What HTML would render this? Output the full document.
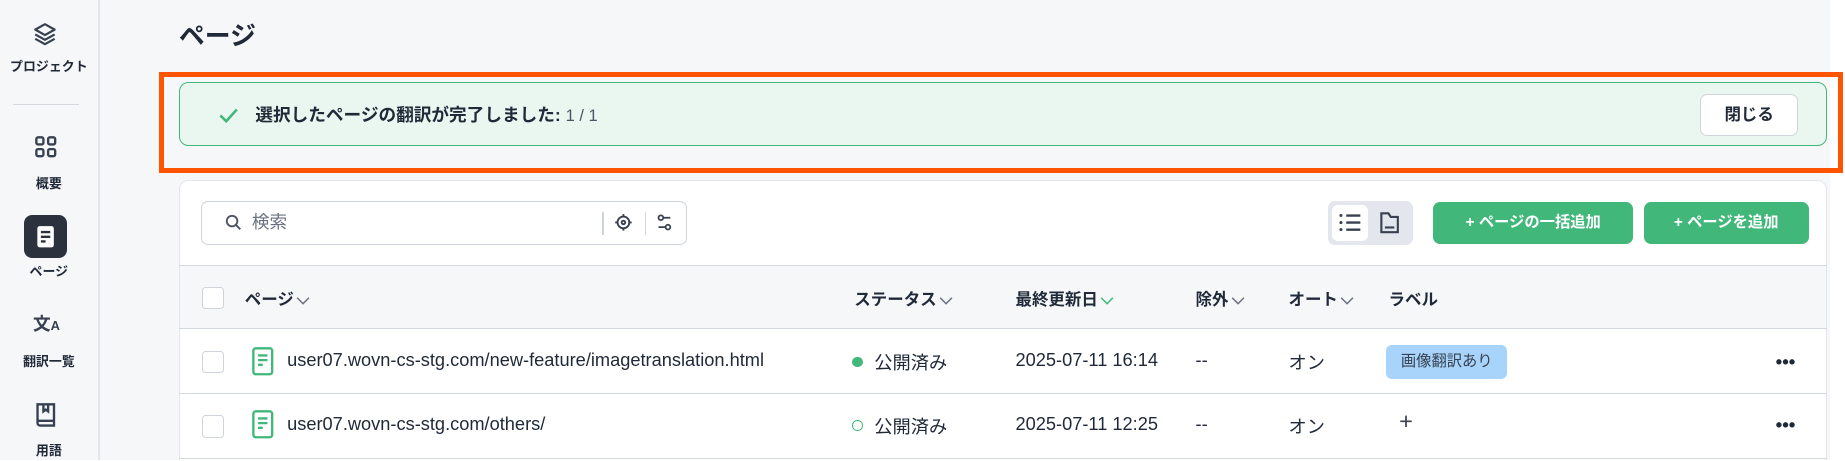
<!DOCTYPE html>
<html><head><meta charset="utf-8"><style>
*{box-sizing:border-box;margin:0;padding:0}
html,body{width:1845px;height:461px;overflow:hidden;background:#fff}
body{font-family:"Liberation Sans","Noto Sans CJK JP",sans-serif;color:#1f2937}
#w{position:relative;width:1568px;height:391px;zoom:1.1767;overflow:hidden}
.abs{position:absolute}
.side{left:0;top:0;width:85px;height:391px;background:#f6f7f9;border-right:2px solid #e3e6ea}
.main{left:85px;top:0;width:1470px;height:391px;background:#f6f7f9}
.nav{position:absolute;left:0;width:83px;text-align:center;font-size:11px;font-weight:bold;color:#1f2937}
.hc{font-size:14px;font-weight:bold;color:#1f2937;top:243px}
.cb{width:18px;height:19px;border:1px solid #cfd4db;border-radius:3px;background:#fff}
.cell{font-size:15.5px;color:#1f2937}
.line{height:1px;background:#d4d9e0;left:152px;width:1401px}
.btn{background:#41b87a;color:#fff;font-size:13px;font-weight:bold;border-radius:6px;text-align:center;line-height:35px;height:35px;top:172px}
.cv{display:inline-block;vertical-align:middle;margin-left:2px}
</style></head><body><div id="w">
<div class="abs side"></div>
<div class="abs main"></div>
<svg class="abs" style="left:27px;top:18px" width="22" height="22" viewBox="0 0 24 24" fill="none" stroke="#374151" stroke-width="2" stroke-linejoin="round"><path d="M12 3 3 8l9 5 9-5z"/><path d="M3 12.5l9 5 9-5"/><path d="M3 16.5l9 5 9-5"/></svg>
<div class="nav" style="top:48px">プロジェクト</div>
<div class="abs" style="left:11px;top:88px;width:56px;height:1px;background:#d4d9e0"></div>
<svg class="abs" style="left:29px;top:115px" width="20" height="20" viewBox="0 0 20 20" fill="none" stroke="#374151" stroke-width="2"><rect x="2" y="2" width="6" height="6" rx="1.5"/><rect x="12" y="2" width="6" height="6" rx="1.5"/><rect x="2" y="12" width="6" height="6" rx="1.5"/><rect x="12" y="12" width="6" height="6" rx="1.5"/></svg>
<div class="nav" style="top:147px">概要</div>
<div class="abs" style="left:20px;top:183px;width:37px;height:36px;background:#2b323d;border-radius:7px"></div>
<svg class="abs" style="left:30px;top:191px" width="18" height="20" viewBox="0 0 18 20"><rect x="2" y="1" width="14" height="18" rx="2" fill="#fff"/><path d="M5 6h8M5 10h8M5 14h4" stroke="#2b323d" stroke-width="2"/></svg>
<div class="nav" style="top:222px">ページ</div>
<div class="abs" style="left:28px;top:264px;font-size:15px;font-weight:bold;color:#374151">文<span style="font-size:11px">A</span></div>
<div class="nav" style="top:298px">翻訳一覧</div>
<svg class="abs" style="left:29px;top:342px" width="20" height="22" viewBox="0 0 20 22" fill="none" stroke="#374151" stroke-width="2"><path d="M3 2h14v18H5a2 2 0 0 1-2-2z"/><path d="M3 16h14M8 2v6l2-1.5 2 1.5V2"/></svg>
<div class="nav" style="top:374px">用語</div>
<div class="abs" style="left:152px;top:14px;font-size:22px;font-weight:bold">ページ</div>
<div class="abs" style="left:135px;top:61px;width:1431px;height:86px;border:5px solid #ff5500"></div>
<div class="abs" style="left:152px;top:70px;width:1401px;height:54px;background:#eaf7f0;border:1.5px solid #41b87a;border-radius:8px"></div>
<svg class="abs" style="left:185px;top:90px" width="18" height="16" viewBox="0 0 18 16" fill="none" stroke="#41b87a" stroke-width="2.2"><path d="M2 8l5 5 9-10"/></svg>
<div class="abs" style="left:217px;top:87px;font-size:15px;font-weight:bold">選択したページの翻訳が完了しました: <span style="font-weight:normal;color:#4b5563;font-size:14px">1 / 1</span></div>
<div class="abs" style="left:1445px;top:80px;width:83px;height:36px;background:#fff;border:1px solid #cfd4db;border-radius:6px;text-align:center;line-height:34px;font-size:14px;font-weight:bold">閉じる</div>
<div class="abs" style="left:152px;top:153px;width:1401px;height:238px;background:#fff;border:1px solid #e3e6ea;border-bottom:none;border-radius:8px 8px 0 0"></div>
<div class="abs" style="left:171px;top:171px;width:413px;height:37px;border:1px solid #cfd4db;border-radius:6px;background:#fff"></div>
<svg class="abs" style="left:191px;top:182px" width="14" height="14" viewBox="0 0 14 14" fill="none" stroke="#4b5563" stroke-width="1.6"><circle cx="6" cy="6" r="4.5"/><path d="M9.5 9.5l3.5 3.5"/></svg>
<div class="abs" style="left:214px;top:178px;font-size:15px;color:#6b7280">検索</div>
<div class="abs" style="left:512px;top:180px;width:1px;height:20px;background:#cfd4db"></div>
<svg class="abs" style="left:522px;top:181px" width="16" height="16" viewBox="0 0 16 16" fill="none" stroke="#374151" stroke-width="1.6"><circle cx="8" cy="8" r="5"/><circle cx="8" cy="8" r="1.5"/><path d="M8 1v2M8 13v2M1 8h2M13 8h2"/></svg>
<div class="abs" style="left:548px;top:180px;width:1px;height:20px;background:#cfd4db"></div>
<svg class="abs" style="left:557px;top:181px" width="16" height="16" viewBox="0 0 16 16" fill="none" stroke="#374151" stroke-width="1.5"><circle cx="5" cy="4" r="2"/><path d="M7 4h6M3 12h6"/><circle cx="11" cy="12" r="2"/></svg>
<div class="abs" style="left:1129px;top:171px;width:72px;height:37px;background:#e3e7ed;border-radius:6px"></div>
<div class="abs" style="left:1132px;top:174px;width:31px;height:31px;background:#fff;border-radius:5px"></div>
<svg class="abs" style="left:1137px;top:180px" width="20" height="18" viewBox="0 0 20 18" fill="none" stroke="#374151" stroke-width="2"><path d="M7 3h12M7 9h12M7 15h12"/><circle cx="2.5" cy="3" r="1.3" fill="#374151" stroke="none"/><circle cx="2.5" cy="9" r="1.3" fill="#374151" stroke="none"/><circle cx="2.5" cy="15" r="1.3" fill="#374151" stroke="none"/></svg>
<svg class="abs" style="left:1172px;top:179px" width="18" height="20" viewBox="0 0 18 20" fill="none" stroke="#374151" stroke-width="1.8"><path d="M2 2h6l2 3h6v13H2z"/><path d="M5 14h8"/></svg>
<div class="abs btn" style="left:1218px;width:170px">+ ページの一括追加</div>
<div class="abs btn" style="left:1397px;width:140px">+ ページを追加</div>
<div class="abs line" style="top:225px"></div>
<div class="abs" style="left:153px;top:226px;width:1399px;height:53px;background:#f6f7f9"></div>
<div class="abs line" style="top:279px"></div>
<div class="abs cb" style="left:172px;top:244px"></div>
<div class="abs hc" style="left:208px">ページ<svg class="cv" width="12" height="8" viewBox="0 0 12 8"><path d="M1 1.5l5 5 5-5" fill="none" stroke="#6b7280" stroke-width="1.3"/></svg></div>
<div class="abs hc" style="left:726px">ステータス<svg class="cv" width="12" height="8" viewBox="0 0 12 8"><path d="M1 1.5l5 5 5-5" fill="none" stroke="#6b7280" stroke-width="1.3"/></svg></div>
<div class="abs hc" style="left:863px">最終更新日<svg class="cv" width="12" height="8" viewBox="0 0 12 8"><path d="M1 1.5l5 5 5-5" fill="none" stroke="#41b87a" stroke-width="1.3"/></svg></div>
<div class="abs hc" style="left:1016px">除外<svg class="cv" width="12" height="8" viewBox="0 0 12 8"><path d="M1 1.5l5 5 5-5" fill="none" stroke="#6b7280" stroke-width="1.3"/></svg></div>
<div class="abs hc" style="left:1095px">オート<svg class="cv" width="12" height="8" viewBox="0 0 12 8"><path d="M1 1.5l5 5 5-5" fill="none" stroke="#6b7280" stroke-width="1.3"/></svg></div>
<div class="abs hc" style="left:1180px">ラベル</div>
<div class="abs cb" style="left:172px;top:298px"></div>
<svg class="abs" style="left:213px;top:294px" width="20" height="26" viewBox="0 0 20 26" fill="none" stroke="#41b87a" stroke-width="2"><rect x="2" y="2" width="16" height="22" rx="2"/><path d="M6 8h8M6 12h8M6 16h4"/></svg>
<div class="abs cell" style="left:244px;top:297px">user07.wovn-cs-stg.com/new-feature/imagetranslation.html</div>
<div class="abs" style="left:724px;top:303px;width:9px;height:9px;border-radius:50%;background:#41b87a"></div>
<div class="abs cell" style="left:743px;top:297px">公開済み</div>
<div class="abs cell" style="left:863px;top:297px">2025-07-11 16:14</div>
<div class="abs cell" style="left:1016px;top:297px">--</div>
<div class="abs cell" style="left:1095px;top:297px">オン</div>
<div class="abs" style="left:1178px;top:293px;width:103px;height:29px;background:#a8d4fb;border-radius:5px;font-size:13px;text-align:center;line-height:29px;color:#374151">画像翻訳あり</div>
<div class="abs" style="left:1509px;top:298px;font-size:16px;font-weight:bold">•••</div>
<div class="abs line" style="top:334px"></div>
<div class="abs cb" style="left:172px;top:353px"></div>
<svg class="abs" style="left:213px;top:348px" width="20" height="26" viewBox="0 0 20 26" fill="none" stroke="#41b87a" stroke-width="2"><rect x="2" y="2" width="16" height="22" rx="2"/><path d="M6 8h8M6 12h8M6 16h4"/></svg>
<div class="abs cell" style="left:244px;top:351px">user07.wovn-cs-stg.com/others/</div>
<div class="abs" style="left:724px;top:357px;width:9px;height:9px;border-radius:50%;border:1.5px solid #41b87a"></div>
<div class="abs cell" style="left:743px;top:351px">公開済み</div>
<div class="abs cell" style="left:863px;top:351px">2025-07-11 12:25</div>
<div class="abs cell" style="left:1016px;top:351px">--</div>
<div class="abs cell" style="left:1095px;top:351px">オン</div>
<div class="abs" style="left:1189px;top:347px;font-size:20px;color:#374151">+</div>
<div class="abs" style="left:1509px;top:352px;font-size:16px;font-weight:bold">•••</div>
<div class="abs line" style="top:389px"></div>
</div></body></html>
